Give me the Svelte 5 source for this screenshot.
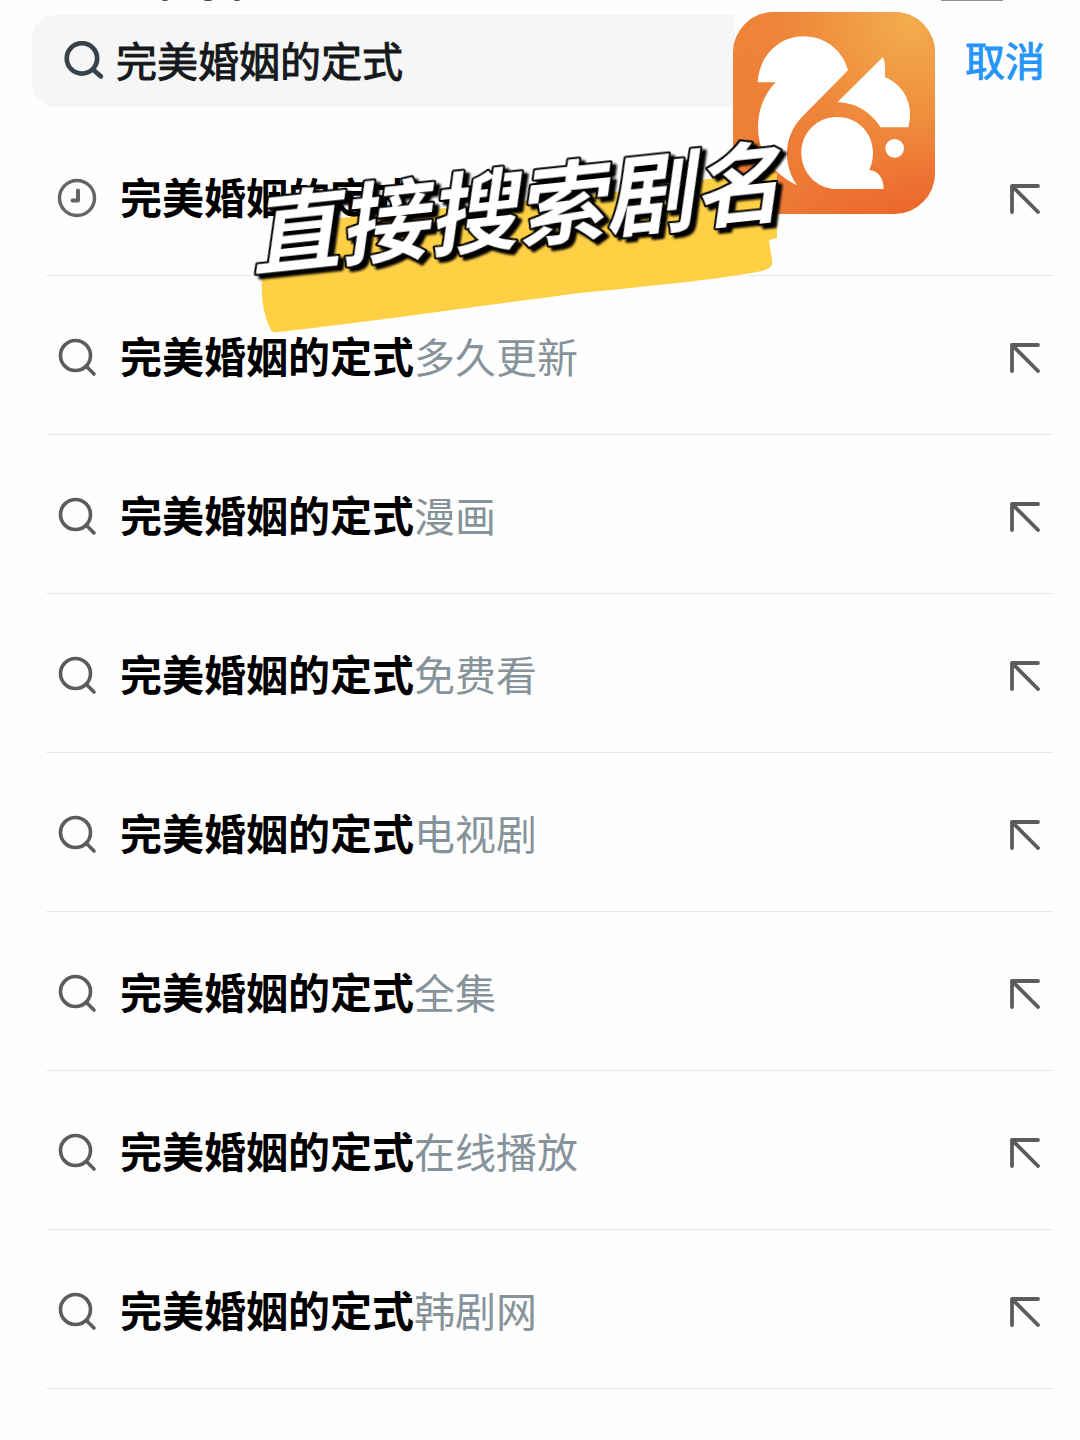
<script>
  const keyword = '完美婚姻的定式';
  let query = $state(keyword);
  const suggestions = [
    { tail: '', recent: true },
    { tail: '多久更新' },
    { tail: '漫画' },
    { tail: '免费看' },
    { tail: '电视剧' },
    { tail: '全集' },
    { tail: '在线播放' },
    { tail: '韩剧网' }
  ];
</script>

<div class="page">
  <div class="status" aria-hidden="true">
    <svg class="status-left" viewBox="0 0 90 2" width="90" height="2">
      <path d="M1 0h8l-3 1h-2zM43 0h10l-3 1h-4zM73 0h8l-3 1h-2z" fill="#444" />
    </svg>
    <span class="battery"></span>
  </div>

  <header>
    <label class="search">
      <svg class="lens" viewBox="0 0 40 40" fill="none" stroke="#37424a" stroke-width="4.6" stroke-linecap="round">
        <circle cx="17.500" cy="17" r="14.800" />
        <path d="M29 28.500l7 6" />
      </svg>
      <input type="text" bind:value={query} aria-label="搜索" />
    </label>
    <button class="cancel" type="button">取消</button>

    <svg class="logo" viewBox="0 0 606 606" role="img" aria-label="UC">
      <defs>
        <radialGradient id="glow" cx="0.88" cy="0.04" r="1">
          <stop offset="0" stop-color="#f2ad4d" />
          <stop offset="0.5" stop-color="#ef8d3d" />
          <stop offset="1" stop-color="#ed7a35" stop-opacity="0" />
        </radialGradient>
        <linearGradient id="base" x1="0" y1="0.2" x2="0.9" y2="0.9">
          <stop offset="0" stop-color="#ef8439" />
          <stop offset="0.55" stop-color="#ed7a35" />
          <stop offset="1" stop-color="#ec652c" />
        </linearGradient>
      </defs>
      <rect width="606" height="606" rx="122" fill="url(#base)" />
      <rect width="606" height="606" rx="122" fill="url(#glow)" />
      <g fill="#fff">
        <path d="M74 211C78 132 138 73 212 73C276 73 330 116 345 175L209 313C150 372 149 458 192 520C117 482 75 425 75 344C75 293 94 246 128 211Z" />
        <path d="M314 270L450 135Q460 163 455 195C512 218 545 278 526 346H443C413 299 370 273 314 270Z" />
        <path d="M312 315C375 315 420 363 420 422C420 442 416 458 409 474C436 476 452 500 452 531H312C251 531 205 482 205 422C205 363 251 315 312 315Z" />
        <circle cx="485" cy="409" r="28" />
      </g>
    </svg>

    <svg class="banner" viewBox="0 0 560 210" role="img" aria-label="直接搜索剧名">
      <path d="M22 145Q20 178 30 198Q31 203 38 202C130 192 240 176 340 163C410 156 475 150 522 141Q534 138 532 130L529 110L537 108V43L468 49L375 62L100 88L60 120Z" fill="#ffd044" />
      <text class="headline" x="13" y="139" transform="rotate(-6 13 139)">直接搜索剧名</text>
    </svg>
  </header>

  <ul>
    {#each suggestions as item}
      <li>
        <a href="#search">
          {#if item.recent}
            <svg class="icon" viewBox="0 0 40 40" fill="none" stroke="#666" stroke-width="3.500" stroke-linecap="round" stroke-linejoin="round">
              <circle cx="20" cy="20" r="17.500" />
              <path d="M21 12.500v10h-5.500" stroke-width="4" />
            </svg>
          {:else}
            <svg class="icon" viewBox="0 0 40 40" fill="none" stroke="#5c5c5c" stroke-width="3.600" stroke-linecap="round">
              <circle cx="18.500" cy="18.500" r="15" />
              <path d="M30 30l7 7" />
            </svg>
          {/if}
          <span class="text"><b>{keyword}</b><span class="tail">{item.tail}</span></span>
        </a>
        <button class="fill" type="button" aria-label="填入" onclick={() => (query = keyword + item.tail)}>
          <svg viewBox="0 0 32 32" fill="none" stroke="#5c5c5c" stroke-width="3.800" stroke-linecap="round" stroke-linejoin="round">
            <path d="M4 30V4H30M4 4L30 30" />
          </svg>
        </button>
      </li>
    {/each}
  </ul>
</div>

<style>
  :global(body) {
    margin: 0;
    background: #fefefe;
  }
  .page {
    font-family: "Noto Sans CJK SC", sans-serif;
    color: #000;
    overflow: hidden;
  }
  .status {
    display: flex;
    justify-content: space-between;
    height: 15px;
    padding: 0 77px 0 160px;
  }
  .status svg {
    display: block;
  }
  .battery {
    width: 62px;
    height: 1px;
    background: #8d8d8d;
  }
  header {
    position: relative;
    display: flex;
    align-items: center;
    height: 92px;
    padding: 0 35px 0 32px;
  }
  .search {
    flex: 1;
    display: flex;
    align-items: center;
    gap: 11px;
    height: 92px;
    box-sizing: border-box;
    padding: 0 32px;
    margin-right: 230px;
    border-radius: 24px 0 0 24px;
    background: #f6f6f6;
  }
  .lens {
    flex: none;
    width: 41px;
    height: 41px;
  }
  input {
    flex: 1;
    min-width: 0;
    padding: 0 0 4px;
    border: 0;
    outline: 0;
    background: none;
    font: 400 41px/60px "Noto Sans CJK SC", sans-serif;
    color: #15191c;
    -webkit-text-stroke: 1px #15191c;
  }
  button {
    padding: 0;
    border: 0;
    background: none;
    cursor: pointer;
  }
  .cancel {
    padding-bottom: 4px;
    font: 400 40px/60px "Noto Sans CJK SC", sans-serif;
    color: #2695f8;
    -webkit-text-stroke: 1px #2695f8;
  }
  .logo {
    position: absolute;
    top: -3px;
    right: 145px;
    width: 202px;
    height: 202px;
  }
  .banner {
    position: absolute;
    z-index: 1;
    top: 115px;
    left: 240px;
    width: 560px;
    height: 210px;
    overflow: visible;
    pointer-events: none;
  }
  .headline {
    font: italic 700 89px "Noto Sans CJK SC", sans-serif;
    fill: #fff;
    stroke: #000;
    stroke-width: 4px;
    stroke-linejoin: round;
    paint-order: stroke;
    filter: drop-shadow(4px 4px 1px #000);
  }
  ul {
    list-style: none;
    margin: 0;
    padding: 10px 27px 0 46px;
  }
  li {
    display: flex;
    align-items: center;
    height: 159px;
    box-sizing: border-box;
    padding: 4px 13px 0 11px;
    border-bottom: 1px solid #e9e9e9;
  }
  a {
    flex: 1;
    display: flex;
    align-items: center;
    gap: 23px;
    color: inherit;
    text-decoration: none;
  }
  .icon {
    flex: none;
    width: 40px;
    height: 40px;
  }
  .text {
    padding-bottom: 5px;
    font-size: 42px;
    line-height: 60px;
    white-space: nowrap;
  }
  b {
    font-weight: 700;
  }
  .tail {
    font-size: 41px;
    color: #87939a;
  }
  .fill {
    width: 32px;
    height: 32px;
  }
  .fill svg {
    display: block;
    width: 32px;
    height: 32px;
  }
</style>
